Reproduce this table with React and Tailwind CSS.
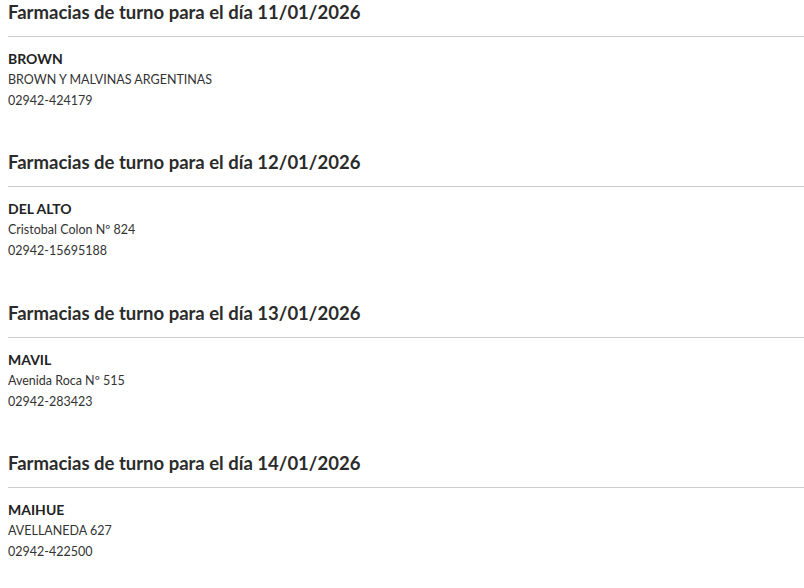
import React from 'react';

const turnos = [
  { fecha: '11/01/2026', nombre: 'BROWN', direccion: 'BROWN Y MALVINAS ARGENTINAS', telefono: '02942-424179' },
  { fecha: '12/01/2026', nombre: 'DEL ALTO', direccion: 'Cristobal Colon Nº 824', telefono: '02942-15695188' },
  { fecha: '13/01/2026', nombre: 'MAVIL', direccion: 'Avenida Roca Nº 515', telefono: '02942-283423' },
  { fecha: '14/01/2026', nombre: 'MAIHUE', direccion: 'AVELLANEDA 627', telefono: '02942-422500' },
];

const App = () => {
  return (
    <div className="min-h-screen bg-white pl-2 text-[#333] font-['Lato',sans-serif]">
      {turnos.map((t) => (
        <section key={t.fecha} className="h-[150.3px]">
          <h2 className="pt-[1px] pb-[12px] text-[18.5px] leading-[23px] font-bold border-b border-[#cccccc] text-[#2b2b2b]">
            Farmacias de turno para el día {t.fecha}
          </h2>
          <div className="pt-[11px] text-[12.5px] leading-[21px]">
            <p className="font-bold text-[14px] text-[#222]">{t.nombre}</p>
            <p>{t.direccion}</p>
            <p>{t.telefono}</p>
          </div>
        </section>
      ))}
    </div>
  );
};

export default App;
